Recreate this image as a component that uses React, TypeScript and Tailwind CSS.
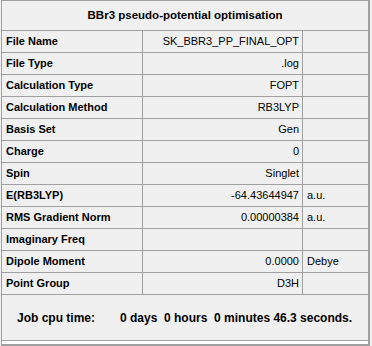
import React from "react";

const rows: [string, string, string][] = [
  ["File Name", "SK_BBR3_PP_FINAL_OPT", ""],
  ["File Type", ".log", ""],
  ["Calculation Type", "FOPT", ""],
  ["Calculation Method", "RB3LYP", ""],
  ["Basis Set", "Gen", ""],
  ["Charge", "0", ""],
  ["Spin", "Singlet", ""],
  ["E(RB3LYP)", "-64.43644947", "a.u."],
  ["RMS Gradient Norm", "0.00000384", "a.u."],
  ["Imaginary Freq", "", ""],
  ["Dipole Moment", "0.0000", "Debye"],
  ["Point Group", "D3H", ""],
];

export default function App() {
  return (
    <div className="w-[372px] h-[346px] bg-[#f0f0f0] font-['Liberation_Sans',Arial,sans-serif] text-[11px] text-black">
      <div className="ml-px w-[369px] h-[346px] border-l border-t border-r-2 border-b-2 border-[#a0a0a0] flex flex-col">
        <div className="h-[30px] border-b border-[#a0a0a0] flex items-center justify-center font-bold text-[11.5px]">
          BBr3 pseudo-potential optimisation
        </div>
        {rows.map(([label, value, unit]) => (
          <div key={label} className="h-[22px] border-b border-[#a0a0a0] flex">
            <div className="w-[141px] border-r border-[#a0a0a0] pl-[4px] flex items-center font-bold">
              {label}
            </div>
            <div className="w-[160px] border-r border-[#a0a0a0] pr-[3px] flex items-center justify-end">
              {value}
            </div>
            <div className="flex-1 pl-[4px] flex items-center">{unit}</div>
          </div>
        ))}
        <div className="h-[46px] border-b border-[#a0a0a0] flex items-center font-bold whitespace-pre text-[12px]">
          <span className="pl-[15px] w-[118px]">Job cpu time:</span>
          <span>0 days  0 hours  0 minutes 46.3 seconds.</span>
        </div>
        <div className="flex-1 bg-white" />
      </div>
    </div>
  );
}
